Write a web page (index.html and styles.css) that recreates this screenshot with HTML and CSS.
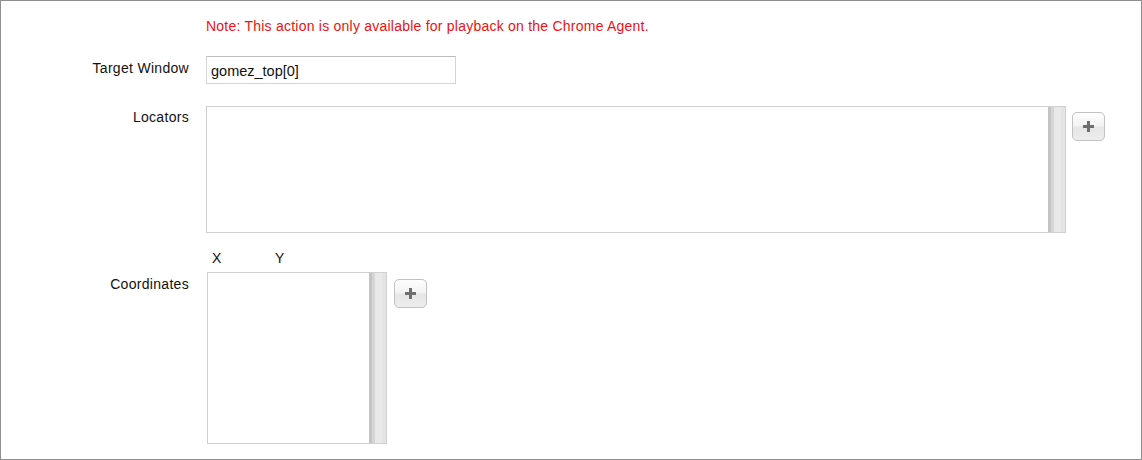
FILE: index.html
```html
<!DOCTYPE html>
<html>
<head>
<meta charset="utf-8">
<link rel="stylesheet" href="styles.css">
</head>
<body>
<div class="panel">
  <div class="row note-row">
    <div class="label"></div>
    <div class="note">Note: This action is only available for playback on the Chrome Agent.</div>
  </div>
  <div class="row target-row">
    <div class="label">Target Window</div>
    <div class="input">gomez_top[0]</div>
  </div>
  <div class="row locators-row">
    <div class="label">Locators</div>
    <div class="field-group">
      <div class="list list-locators"><div class="scrollbar"></div></div>
      <button class="plus-btn" type="button" aria-label="Add">
        <svg width="11" height="11" viewBox="0 0 11 11"><path d="M4 0h3v4h4v3H7v4H4V7H0V4h4z" fill="#6e6e6e"/></svg>
      </button>
    </div>
  </div>
  <div class="row xy-row">
    <div class="label"></div>
    <div class="xy"><span class="x">X</span><span class="y">Y</span></div>
  </div>
  <div class="row coords-row">
    <div class="label">Coordinates</div>
    <div class="field-group">
      <div class="list list-coords"><div class="scrollbar"></div></div>
      <button class="plus-btn plus-coords" type="button" aria-label="Add">
        <svg width="11" height="11" viewBox="0 0 11 11"><path d="M4 0h3v4h4v3H7v4H4V7H0V4h4z" fill="#6e6e6e"/></svg>
      </button>
    </div>
  </div>
</div>
</body>
</html>
```

FILE: styles.css
```css
html, body {
  margin: 0;
  padding: 0;
  background: #fff;
}
body {
  font-family: "Liberation Sans", Arial, sans-serif;
  font-size: 14px;
  color: #111;
}
.panel {
  box-sizing: border-box;
  width: 1142px;
  height: 460px;
  border: 1px solid #8e8e8e;
  padding-top: 17px;
  overflow: hidden;
}
.row {
  display: grid;
  grid-template-columns: 188px 1fr;
  column-gap: 17px;
  align-items: start;
}
.label {
  text-align: right;
  line-height: 16px;
  font-size: 14px;
  letter-spacing: 0.3px;
}
.note {
  color: #ee1111;
  line-height: 16px;
  font-size: 14px;
  letter-spacing: 0.23px;
}
.target-row {
  margin-top: 22px;
}
.target-row .label {
  padding-top: 4px;
}
.input {
  box-sizing: border-box;
  width: 250px;
  height: 28px;
  border: 1px solid #d4d4d4;
  border-top-color: #bdbdbd;
  padding: 5px 4px 0;
  font-size: 14.5px;
  line-height: 18px;
  color: #111;
}
.locators-row {
  margin-top: 22px;
}
.locators-row .label {
  padding-top: 3px;
}
.field-group {
  display: flex;
  align-items: flex-start;
  gap: 6px;
}
.list {
  box-sizing: border-box;
  border: 1px solid #d0d0d0;
  display: flex;
  justify-content: flex-end;
  background: #fff;
}
.list-locators {
  width: 860px;
  height: 127px;
}
.scrollbar {
  width: 17px;
  height: 100%;
  background:
    linear-gradient(to right, #c4c4c4 0, #c4c4c4 3px, #d6d6d6 3px, #d6d6d6 6px, #e9e9e9 6px, #e9e9e9 13px, #e4e4e4 13px);
}
.plus-btn {
  box-sizing: border-box;
  width: 33px;
  height: 29px;
  margin: 6px 0 0 0;
  padding: 0;
  border: 1px solid #c2c2c2;
  border-radius: 5px;
  background: linear-gradient(#fdfdfd 0%, #f4f4f4 45%, #e6e6e6 55%, #ededed 100%);
  display: flex;
  align-items: center;
  justify-content: center;
}
.xy-row {
  margin-top: 17px;
}
.xy {
  line-height: 16px;
  font-size: 14px;
  padding-left: 6px;
}
.xy .x {
  display: inline-block;
  width: 63px;
}
.coords-row {
  margin-top: 6px;
}
.coords-row .label {
  padding-top: 4px;
}
.coords-row .field-group {
  padding-left: 1px;
}
.list-coords {
  width: 180px;
  height: 172px;
}
.plus-coords {
  margin-top: 7px;
}
.coords-row .field-group {
  gap: 7px;
}
```
